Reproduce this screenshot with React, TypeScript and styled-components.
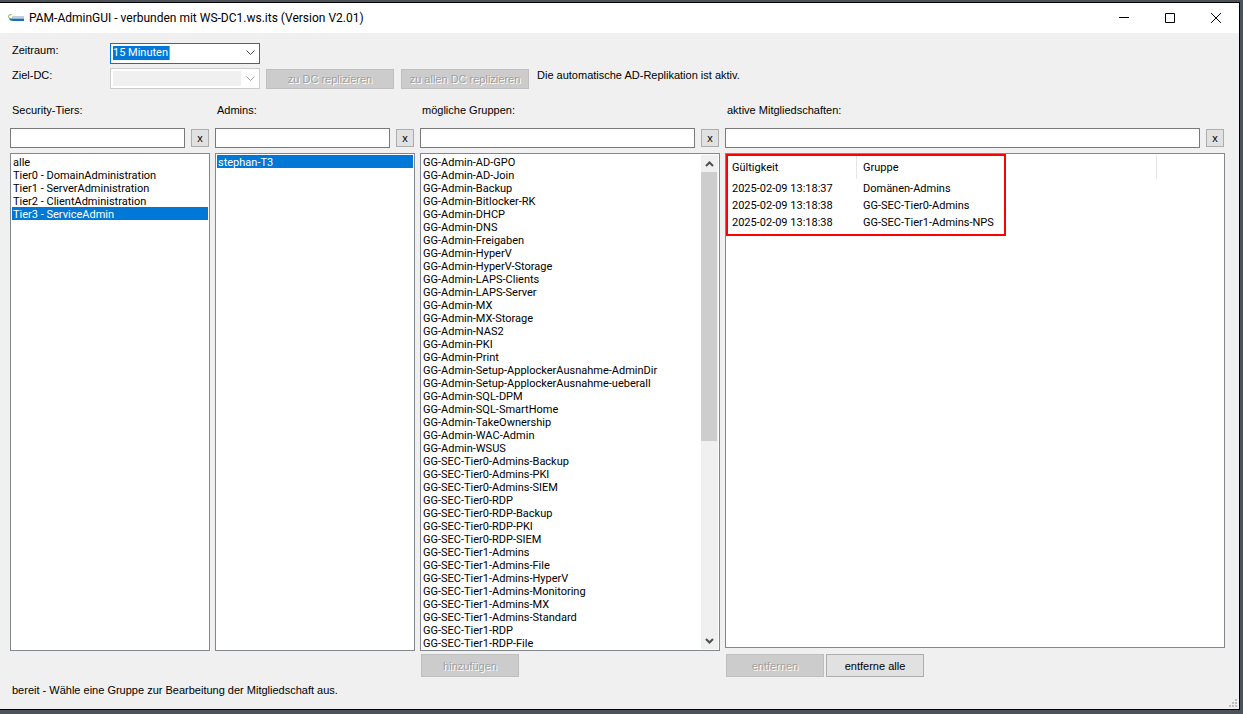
import React, { useRef } from 'react';
import styled, { createGlobalStyle } from 'styled-components';

const GlobalStyle = createGlobalStyle`
  * { box-sizing: border-box; }
  body { margin: 0; background: #4b525a; }
  body, button, input, select, table {
    font-family: 'Liberation Sans', Arial, sans-serif;
    font-size: 11px;
    line-height: 14px;
    color: #000;
  }
`;

const Desktop = styled.div`
  display: flex;
  min-height: 100vh;
  padding: 2px 3px 4px 0;
  background: #4b525a;
`;

const Window = styled.div`
  flex: 1;
  min-width: 0;
  display: flex;
  flex-direction: column;
  border: solid #000;
  border-width: 1px 1px 1px 0;
  background: #f0f0f0;
`;

const TitleBar = styled.header`
  display: flex;
  align-items: center;
  height: 30px;
  padding-left: 8px;
  background: #fff;
`;

const Title = styled.h1`
  flex: 1;
  margin: 0 0 0 5px;
  font: 400 12px/16px Roboto, 'Segoe UI', sans-serif;
`;

const CaptionButton = styled.button`
  display: flex;
  align-items: center;
  justify-content: center;
  width: 46px;
  height: 30px;
  padding: 0;
  border: 0;
  background: transparent;
`;

const Content = styled.main`
  flex: 1;
  display: flex;
  flex-direction: column;
  padding: 10px 14px 0 10px;
`;

const FormRow = styled.div`
  display: flex;
  align-items: flex-end;
  height: 21px;
  margin-bottom: 4px;
`;

const FieldLabel = styled.label`
  align-self: flex-start;
  width: 100px;
  padding-left: 2px;
`;

const Combo = styled.div<{ $active?: boolean }>`
  display: flex;
  align-items: center;
  justify-content: space-between;
  width: 150px;
  height: 21px;
  padding: 0 4px ${p => (p.$active ? '2px' : '0')} 2px;
  border: 1px solid ${p => (p.$active ? '#0078d7' : '#cccccc')};
  background: #fff;
`;

const ComboSelect = styled.select<{ $active?: boolean }>`
  appearance: none;
  width: ${p => (p.$active ? '57px' : '128px')};
  height: ${p => (p.$active ? '14px' : '15px')};
  padding: 0;
  border: 0;
  border-right: ${p => (p.$active ? '1px solid #ff8728' : '0')};
  border-radius: 0;
  outline: 0;
  background: ${p => (p.$active ? '#0078d7' : '#f0f0f0')};
  font-family: Roboto, Arial, sans-serif;
  color: #fff;
  opacity: 1;
`;

const PushButton = styled.button<{ $w: number; $h: number }>`
  width: ${p => p.$w}px;
  height: ${p => p.$h}px;
  padding: 0;
  border: 1px solid #adadad;
  border-radius: 0;
  background: #e1e1e1;
  white-space: nowrap;

  &:disabled {
    border-color: #bfbfbf;
    background: #cccccc;
    color: #a0a0a0;
    text-shadow: 1px 1px 0 #fff;
  }
`;

const ReplicationButtons = styled.div`
  display: flex;
  gap: 7px;
  margin: 0 8px 0 6px;
`;

const Hint = styled.span`
  align-self: flex-start;
`;

const Columns = styled.div`
  flex: 1;
  display: grid;
  grid-template-columns: 2fr 2fr 3fr 5fr;
  gap: 0 5px;
  margin-top: 10px;
`;

const Column = styled.section`
  display: flex;
  flex-direction: column;
  min-width: 0;
`;

const ColumnLabel = styled.label`
  margin-bottom: 11px;
  padding-left: 2px;
`;

const FilterRow = styled.div`
  display: flex;
  align-items: center;
  gap: 6px;
  margin-bottom: 5px;
  padding-right: 1px;
`;

const FilterInput = styled.input`
  flex: 1;
  min-width: 0;
  height: 20px;
  padding: 0 3px;
  border: 1px solid #7a7a7a;
  border-radius: 0;
  background: #fff;
`;

const ListFrame = styled.div`
  flex: 1;
  display: flex;
  padding: 1px;
  border: 1px solid #828790;
  background: #fff;
`;

const ListBox = styled.select`
  flex: 1;
  min-width: 0;
  height: 494px;
  padding: 0;
  border: 0;
  border-radius: 0;
  outline: 0;
  background: #fff;
  font-family: Roboto, Arial, sans-serif;
  overflow-x: hidden;
  scrollbar-width: none;

  option {
    height: 13px;
    min-height: 13px;
    padding: 1px 0 0 1px;
    line-height: 13px;
    color: #000;
  }

  option:checked {
    background: linear-gradient(#0078d7, #0078d7);
    -webkit-text-fill-color: #fff;
  }
`;

const ScrollBar = styled.div`
  display: flex;
  flex-direction: column;
  width: 17px;
  padding-right: 1px;
  background: #f0f0f0;
`;

const ScrollArrow = styled.button`
  display: flex;
  align-items: center;
  justify-content: center;
  height: 17px;
  padding: 0;
  border: 0;
  background: transparent;
`;

const ScrollTrack = styled.div`
  flex: 1;
`;

const ScrollThumb = styled.div`
  height: calc(100% * 38 / 65);
  background: #cdcdcd;
`;

const ListView = styled.div`
  position: relative;
  flex: 1;
  margin-bottom: 3px;
  padding-top: 1px;
  border: 1px solid #828790;
  background: #fff;
`;

const MembershipTable = styled.table`
  width: 100%;
  table-layout: fixed;
  border-collapse: separate;
  border-spacing: 0;
  font-family: Roboto, Arial, sans-serif;

  th, td {
    padding: 2px 6px 0;
    text-align: left;
    font-weight: 400;
    white-space: nowrap;
  }

  th {
    height: 24px;
    border-right: 1px solid #e5e5e5;
  }

  th:last-child { border-right: 0; }

  td { height: 17px; }
`;

const Highlight = styled.div`
  position: absolute;
  top: 0;
  left: 0;
  width: 280px;
  height: 82px;
  border: 2px solid #f00;
  pointer-events: none;
`;

const Actions = styled.div`
  display: flex;
  gap: 2px;
  height: 26px;
  padding: 3px 0 0 1px;
`;

const StatusBar = styled.footer`
  display: flex;
  align-items: flex-end;
  justify-content: space-between;
  height: 32px;
  padding: 0 2px 2px 12px;
`;

const StatusText = styled.span`
  align-self: flex-start;
  margin-top: 6px;
`;

const tiers = [
  'alle',
  'Tier0 - DomainAdministration',
  'Tier1 - ServerAdministration',
  'Tier2 - ClientAdministration',
  'Tier3 - ServiceAdmin',
];

const groups = [
  'GG-Admin-AD-GPO', 'GG-Admin-AD-Join', 'GG-Admin-Backup', 'GG-Admin-Bitlocker-RK',
  'GG-Admin-DHCP', 'GG-Admin-DNS', 'GG-Admin-Freigaben', 'GG-Admin-HyperV',
  'GG-Admin-HyperV-Storage', 'GG-Admin-LAPS-Clients', 'GG-Admin-LAPS-Server', 'GG-Admin-MX',
  'GG-Admin-MX-Storage', 'GG-Admin-NAS2', 'GG-Admin-PKI', 'GG-Admin-Print',
  'GG-Admin-Setup-ApplockerAusnahme-AdminDir', 'GG-Admin-Setup-ApplockerAusnahme-ueberall',
  'GG-Admin-SQL-DPM', 'GG-Admin-SQL-SmartHome', 'GG-Admin-TakeOwnership', 'GG-Admin-WAC-Admin',
  'GG-Admin-WSUS', 'GG-SEC-Tier0-Admins-Backup', 'GG-SEC-Tier0-Admins-PKI',
  'GG-SEC-Tier0-Admins-SIEM', 'GG-SEC-Tier0-RDP', 'GG-SEC-Tier0-RDP-Backup',
  'GG-SEC-Tier0-RDP-PKI', 'GG-SEC-Tier0-RDP-SIEM', 'GG-SEC-Tier1-Admins',
  'GG-SEC-Tier1-Admins-File', 'GG-SEC-Tier1-Admins-HyperV', 'GG-SEC-Tier1-Admins-Monitoring',
  'GG-SEC-Tier1-Admins-MX', 'GG-SEC-Tier1-Admins-Standard', 'GG-SEC-Tier1-RDP',
  'GG-SEC-Tier1-RDP-File',
];

const memberships = [
  ['2025-02-09 13:18:37', 'Domänen-Admins'],
  ['2025-02-09 13:18:38', 'GG-SEC-Tier0-Admins'],
  ['2025-02-09 13:18:38', 'GG-SEC-Tier1-Admins-NPS'],
];

const AppIcon = () => (
  <svg width="16" height="16" viewBox="0 0 16 16" aria-hidden="true">
    <rect x="4" y="6" width="12" height="2" fill="#c3d0da" />
    <path d="M2 8.500h14V11H5Q2 11 1 9z" fill="#1c6fae" />
    <path d="M3 8.500h13" stroke="#8fb9d8" fill="none" />
    <path d="M3.500 4.500Q.5 4.500.5 6.500T3 9" stroke="#6cb33f" fill="none" />
  </svg>
);

const Chevron = ({ color }: { color: string }) => (
  <svg width="9" height="6" viewBox="0 0 9 6" fill="none" stroke={color} aria-hidden="true">
    <path d="M.5.5l4 4 4-4" />
  </svg>
);

const ScrollChevron = ({ up }: { up?: boolean }) => (
  <svg width="9" height="6" viewBox="0 0 9 6" fill="none" stroke="#505050" strokeWidth="2" aria-hidden="true">
    <path d={up ? 'M1 5l3.500-3.500L8 5' : 'M1 1l3.500 3.500L8 1'} />
  </svg>
);

const Grip = () => (
  <svg width="8" height="8" viewBox="0 0 8 8" fill="#bfbfbf" aria-hidden="true">
    <path d="M6 0h2v2H6zM3 3h2v2H3zM6 3h2v2H6zM0 6h2v2H0zM3 6h2v2H3zM6 6h2v2H6z" />
  </svg>
);

const FilterBar = ({ id, label }: { id: string; label: string }) => (
  <>
    <ColumnLabel htmlFor={id}>{label}</ColumnLabel>
    <FilterRow>
      <FilterInput id={id} type="text" />
      <PushButton type="button" $w={18} $h={18} aria-label={`Filter ${label} leeren`}>x</PushButton>
    </FilterRow>
  </>
);

interface ListProps {
  label: string;
  items: string[];
  selected?: string[];
  scrollable?: boolean;
}

const List = ({ label, items, selected = [], scrollable }: ListProps) => {
  const ref = useRef<HTMLSelectElement>(null);
  const scroll = (amount: number) => ref.current?.scrollBy(0, amount);
  return (
    <ListFrame>
      <ListBox ref={ref} size={38} multiple aria-label={label} defaultValue={selected}>
        {items.map(item => <option key={item} value={item}>{item}</option>)}
      </ListBox>
      {scrollable && (
        <ScrollBar>
          <ScrollArrow type="button" aria-label="Nach oben" onClick={() => scroll(-13)}>
            <ScrollChevron up />
          </ScrollArrow>
          <ScrollTrack><ScrollThumb /></ScrollTrack>
          <ScrollArrow type="button" aria-label="Nach unten" onClick={() => scroll(13)}>
            <ScrollChevron />
          </ScrollArrow>
        </ScrollBar>
      )}
    </ListFrame>
  );
};

export default function App() {
  return (
    <>
      <GlobalStyle />
      <Desktop>
        <Window>
          <TitleBar>
            <AppIcon />
            <Title>PAM-AdminGUI - verbunden mit WS-DC1.ws.its (Version V2.01)</Title>
            <CaptionButton type="button" aria-label="Minimieren">
              <svg width="10" height="10" viewBox="0 0 10 10"><path d="M0 4.500h10" stroke="#000" /></svg>
            </CaptionButton>
            <CaptionButton type="button" aria-label="Maximieren">
              <svg width="10" height="10" viewBox="0 0 10 10"><path d="M.5.5h9v9h-9z" fill="none" stroke="#000" /></svg>
            </CaptionButton>
            <CaptionButton type="button" aria-label="Schließen">
              <svg width="10" height="10" viewBox="0 0 10 10"><path d="M0 0l10 10M10 0L0 10" stroke="#000" /></svg>
            </CaptionButton>
          </TitleBar>
          <Content>
            <FormRow>
              <FieldLabel htmlFor="period">Zeitraum:</FieldLabel>
              <Combo $active>
                <ComboSelect id="period" $active>
                  <option>15 Minuten</option>
                </ComboSelect>
                <Chevron color="#404040" />
              </Combo>
            </FormRow>
            <FormRow>
              <FieldLabel htmlFor="target">Ziel-DC:</FieldLabel>
              <Combo>
                <ComboSelect id="target" disabled />
                <Chevron color="#a0a0a0" />
              </Combo>
              <ReplicationButtons>
                <PushButton type="button" disabled $w={128} $h={20}>zu DC replizieren</PushButton>
                <PushButton type="button" disabled $w={128} $h={20}>zu allen DC replizieren</PushButton>
              </ReplicationButtons>
              <Hint>Die automatische AD-Replikation ist aktiv.</Hint>
            </FormRow>
            <Columns>
              <Column>
                <FilterBar id="filter-tiers" label="Security-Tiers:" />
                <List label="Security-Tiers" items={tiers} selected={['Tier3 - ServiceAdmin']} />
                <Actions />
              </Column>
              <Column>
                <FilterBar id="filter-admins" label="Admins:" />
                <List label="Admins" items={['stephan-T3']} selected={['stephan-T3']} />
                <Actions />
              </Column>
              <Column>
                <FilterBar id="filter-groups" label="mögliche Gruppen:" />
                <List label="mögliche Gruppen" items={groups} scrollable />
                <Actions>
                  <PushButton type="button" disabled $w={98} $h={23}>hinzufügen</PushButton>
                </Actions>
              </Column>
              <Column>
                <FilterBar id="filter-memberships" label="aktive Mitgliedschaften:" />
                <ListView>
                  <MembershipTable>
                    <colgroup>
                      <col style={{ width: 131 }} />
                      <col style={{ width: 300 }} />
                      <col />
                    </colgroup>
                    <thead>
                      <tr><th scope="col">Gültigkeit</th><th scope="col">Gruppe</th><th /></tr>
                    </thead>
                    <tbody>
                      {memberships.map(([until, group]) => (
                        <tr key={group}><td>{until}</td><td>{group}</td><td /></tr>
                      ))}
                    </tbody>
                  </MembershipTable>
                  <Highlight />
                </ListView>
                <Actions>
                  <PushButton type="button" disabled $w={98} $h={23}>entfernen</PushButton>
                  <PushButton type="button" $w={98} $h={23}>entferne alle</PushButton>
                </Actions>
              </Column>
            </Columns>
          </Content>
          <StatusBar>
            <StatusText>bereit - Wähle eine Gruppe zur Bearbeitung der Mitgliedschaft aus.</StatusText>
            <Grip />
          </StatusBar>
        </Window>
      </Desktop>
    </>
  );
}
